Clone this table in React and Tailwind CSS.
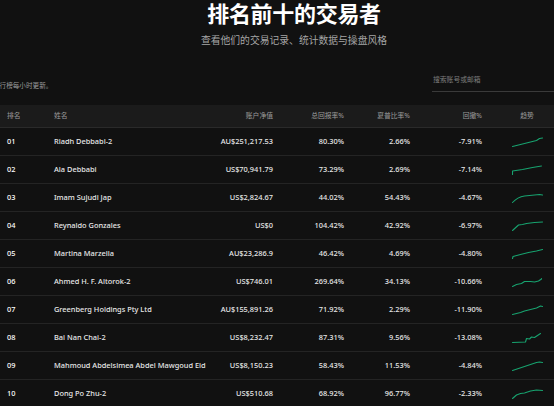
import React from 'react'

const rows = [
  { rank: '01', name: 'Riadh Debbabi-2', equity: 'AU$251,217.53', ret: '80.30%', sharpe: '2.66%', dd: '-7.91%', trend: 'M0 11 L6 9.5 L12 8 L18 6.5 L24 5 L27 3 L30 2.5' },
  { rank: '02', name: 'Ala Debbabi', equity: 'US$70,941.79', ret: '73.29%', sharpe: '2.69%', dd: '-7.14%', trend: 'M0 11 L0 7.5 L10 6 L20 4 L29 2.5' },
  { rank: '03', name: 'Imam Sujudi Jap', equity: 'US$2,824.67', ret: '44.02%', sharpe: '54.43%', dd: '-4.67%', trend: 'M0 11 Q5 5.5 12 4.5 L27 3 L30 3.5' },
  { rank: '04', name: 'Reynaldo Gonzales', equity: 'US$0', ret: '104.42%', sharpe: '42.92%', dd: '-6.97%', trend: 'M0 11 L6 5.5 L10 5 L14 4 L22 3 L30 2.5' },
  { rank: '05', name: 'Martina Marzella', equity: 'AU$23,286.9', ret: '46.42%', sharpe: '4.69%', dd: '-4.80%', trend: 'M0 11 L0.5 9 L8 7 L16 5 L24 3.5 L30 2' },
  { rank: '06', name: 'Ahmed H. F. Altorok-2', equity: 'US$746.01', ret: '269.64%', sharpe: '34.13%', dd: '-10.66%', trend: 'M0 11 L4 9 L9 8 L12 6 L18 6 L22 6.5 L26 5.5 L29 3.5 L29 3' },
  { rank: '07', name: 'Greenberg Holdings Pty Ltd', equity: 'AU$155,891.26', ret: '71.92%', sharpe: '2.29%', dd: '-11.90%', trend: 'M0 11 L8 9 L12 7.5 L18 6 L24 4.5 L28 2.5 L30 3' },
  { rank: '08', name: 'Bai Nan Chai-2', equity: 'US$8,232.47', ret: '87.31%', sharpe: '9.56%', dd: '-13.08%', trend: 'M0 11 L13 10.5 L14 7 L17 7.5 L19 5.5 L22 6 L25 4 L28 2' },
  { rank: '09', name: 'Mahmoud Abdelsimea Abdel Mawgoud Eid', equity: 'US$8,150.23', ret: '58.43%', sharpe: '11.53%', dd: '-4.84%', trend: 'M0 11 L6 9 L12 7 L18 5 L24 3 L27 2.5 L30 3' },
  { rank: '10', name: 'Dong Po Zhu-2', equity: 'US$510.68', ret: '68.92%', sharpe: '96.77%', dd: '-2.33%', trend: 'M0 11 L4 7.5 L8 6 L12 5.5 L18 3.5 L24 2.5 L30 3' },
]

const grid = 'grid grid-cols-[54px_150px_69px_71px_66px_72px_1fr] items-center'

function Spark({ d }) {
  return (
    <svg width="31" height="13" viewBox="-0.5 -0.5 31 13" fill="none">
      <path d={d} stroke="#17a36f" strokeWidth="1.1" strokeLinejoin="round" strokeLinecap="round" />
    </svg>
  )
}

export default function App() {
  return (
    <div
      className="w-[554px] h-[406px] overflow-hidden bg-[#111111] text-[#e8e8e8]"
      style={{ fontFamily: '"Noto Sans", "Noto Sans CJK SC", sans-serif' }}
    >
      <div className="pl-[34px] text-center">
        <h1 className="text-[22px] leading-[26px] font-bold text-white tracking-[-0.3px]">排名前十的交易者</h1>
        <p className="mt-[8px] text-[9.8px] leading-[14px] text-[#a6a6a6]">查看他们的交易记录、统计数据与操盘风格</p>
      </div>

      <div className="mt-[22px] flex items-end">
        <span className="-ml-[7px] mb-[1px] text-[6.6px] leading-[10px] text-[#9a9a9a]">排行榜每小时更新。</span>
        <div className="ml-auto w-[122px] h-[22px] flex items-center pl-[1px] border-b border-[#3a3a3a] text-[6.8px] text-[#7d7d7d]">
          搜索账号或邮箱
        </div>
      </div>

      <div className="mt-[13px]">
        <div className={`${grid} h-[23px] bg-[#1b1b1b] border-b border-[#2a2a2a] text-[6.8px] text-[#9c9c9c]`}>
          <span className="pl-[7px]">排名</span>
          <span>姓名</span>
          <span className="text-right">账户净值</span>
          <span className="text-right">总回报率%</span>
          <span className="text-right">夏普比率%</span>
          <span className="text-right">回撤%</span>
          <span className="pl-[18px] text-center">趋势</span>
        </div>
        {rows.map(r => (
          <div key={r.rank} className={`${grid} h-[28px] border-b border-[#242424] text-[7.4px] font-medium`}>
            <span className="pl-[7px] text-white">{r.rank}</span>
            <span className="whitespace-nowrap">{r.name}</span>
            <span className="text-right">{r.equity}</span>
            <span className="text-right">{r.ret}</span>
            <span className="text-right">{r.sharpe}</span>
            <span className="text-right">{r.dd}</span>
            <span className="pl-[30px] flex">
              <Spark d={r.trend} />
            </span>
          </div>
        ))}
      </div>
    </div>
  )
}
